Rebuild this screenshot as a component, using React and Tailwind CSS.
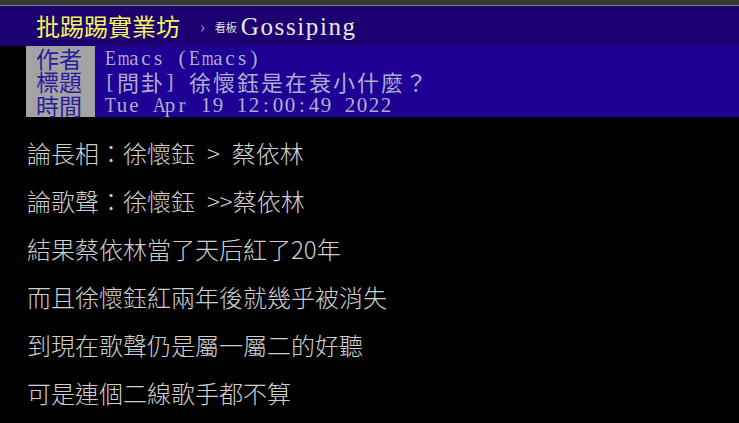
const CJK = '"Noto Sans CJK TC", "Noto Sans CJK SC", sans-serif';

const META = [
	{ label: '作者', value: 'Emacs (Emacs)' },
	{ label: '標題', value: '[問卦] 徐懷鈺是在衰小什麼？' },
	{ label: '時間', value: 'Tue Apr 19 12:00:49 2022' },
];

const LINES = [
	'論長相：徐懷鈺\u2002>\u2002蔡依林',
	'論歌聲：徐懷鈺\u2002>>蔡依林',
	'結果蔡依林當了天后紅了20年',
	'而且徐懷鈺紅兩年後就幾乎被消失',
	'到現在歌聲仍是屬一屬二的好聽',
	'可是連個二線歌手都不算',
];

const VERY_WIDE = 'mwMW';
const WIDE = 'ABCDEFGHKNOPQRSTUVXYZ';

// terminal-style cells: ascii 12px wide, wide chars 24px
function Cells({ text }) {
	return Array.from(text).map((ch, i) => {
		if (ch.charCodeAt(0) >= 128) {
			return (
				<span
					key={i}
					className="inline-block h-[20px] w-[24px] text-center align-top text-[22px] leading-[20px]"
					style={{ fontFamily: CJK }}
				>
					{ch}
				</span>
			);
		}
		const squeeze = VERY_WIDE.includes(ch) ? 'scale-x-[0.72]' : WIDE.includes(ch) ? 'scale-x-[0.85]' : '';
		return (
			<span
				key={i}
				className={`inline-block h-[20px] w-[12px] text-center align-top font-['Liberation_Serif',serif] text-[21px] leading-[20px] ${squeeze}`}
			>
				{ch === ' ' ? '\u00a0' : ch}
			</span>
		);
	});
}

export default function App() {
	return (
		<div className="h-[423px] w-[739px] overflow-hidden bg-black">
			<div className="h-[5px] bg-[#383838]" />
			<div className="h-px bg-[#7a7a7a]" />
			<div className="flex h-[40px] items-center bg-[#1c0072] pl-[36px]">
				<span className="text-[24px] leading-none text-[#f5f55a]" style={{ fontFamily: CJK }}>
					批踢踢實業坊
				</span>
				<span className="ml-[20px] text-[16px] leading-none text-[#9a9ab0]" style={{ fontFamily: CJK }}>
					›
				</span>
				<span className="ml-[10px] mt-[3px] text-[11px] leading-none text-[#e0e0e0]" style={{ fontFamily: CJK }}>
					看板
				</span>
				<span className="ml-[4px] font-['Liberation_Serif',serif] text-[25px] leading-none tracking-[1.6px] text-[#e8e8e8]">
					Gossiping
				</span>
			</div>
			<div className="flex h-[71px] pl-[26px]">
				<div className="flex w-[69px] flex-col justify-around bg-[#a3a3a3] pl-[10px]">
					{META.map((m) => (
						<div key={m.label} className="text-[23px] leading-[20px] text-[#2a1c9c]" style={{ fontFamily: CJK }}>
							{m.label}
						</div>
					))}
				</div>
				<div className="flex flex-1 flex-col justify-around bg-[#1e0094] pl-[9px]">
					{META.map((m) => (
						<div key={m.label} className="h-[20px] whitespace-nowrap leading-[20px] text-[#aeaed0]">
							<Cells text={m.value} />
						</div>
					))}
				</div>
			</div>
			<div className="pl-[27px] pt-[12px]" style={{ fontFamily: CJK }}>
				{LINES.map((l) => (
					<div key={l} className="whitespace-pre text-[24px] font-light leading-[48px] text-[#cfcfcf]">
						{l}
					</div>
				))}
			</div>
		</div>
	);
}
